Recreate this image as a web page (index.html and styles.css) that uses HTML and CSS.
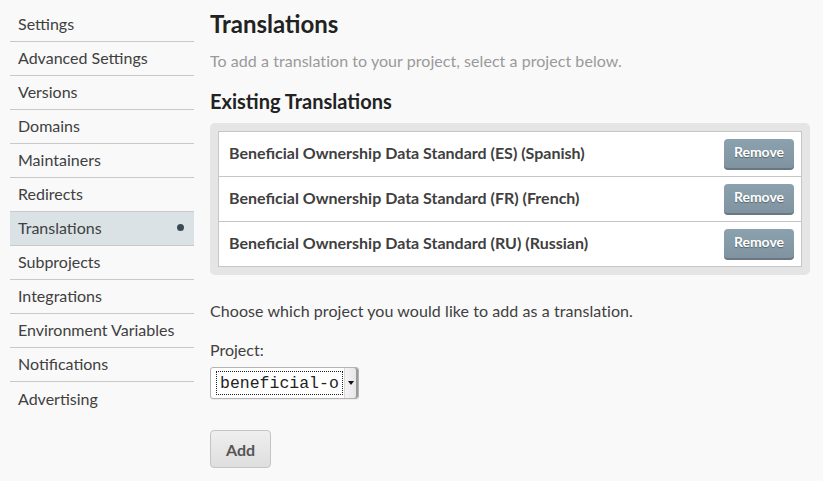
FILE: index.html
```html
<!DOCTYPE html>
<html>
<head>
<meta charset="utf-8">
<link rel="stylesheet" href="styles.css">
</head>
<body>
<div class="page">
  <nav class="sidebar">
    <a class="nav-item">Settings</a>
    <a class="nav-item">Advanced Settings</a>
    <a class="nav-item">Versions</a>
    <a class="nav-item">Domains</a>
    <a class="nav-item">Maintainers</a>
    <a class="nav-item">Redirects</a>
    <a class="nav-item active">Translations<span class="dot"></span></a>
    <a class="nav-item">Subprojects</a>
    <a class="nav-item">Integrations</a>
    <a class="nav-item">Environment Variables</a>
    <a class="nav-item">Notifications</a>
    <a class="nav-item last">Advertising</a>
  </nav>
  <main class="main">
    <h1 class="title">Translations</h1>
    <p class="subtitle">To add a translation to your project, select a project below.</p>
    <h2 class="section">Existing Translations</h2>
    <div class="box">
      <div class="list">
        <div class="row"><span class="row-name">Beneficial Ownership Data Standard (ES) (Spanish)</span><button class="remove">Remove</button></div>
        <div class="row"><span class="row-name">Beneficial Ownership Data Standard (FR) (French)</span><button class="remove">Remove</button></div>
        <div class="row last"><span class="row-name">Beneficial Ownership Data Standard (RU) (Russian)</span><button class="remove">Remove</button></div>
      </div>
    </div>
    <p class="choose">Choose which project you would like to add as a translation.</p>
    <label class="label">Project:</label>
    <div class="select"><span class="select-value">beneficial-o</span><span class="select-arrow"><span class="tri"></span></span></div>
    <button class="add">Add</button>
  </main>
</div>
</body>
</html>
```
FILE: styles.css
```css
html, body {
  margin: 0;
  padding: 0;
  background: #f9f9f9;
  font-family: Lato, "Open Sans", sans-serif;
  color: #404040;
}
.page {
  display: flex;
  gap: 16px;
  padding: 8px 0 0 10px;
}
.sidebar {
  width: 184px;
  display: flex;
  flex-direction: column;
}
.nav-item {
  display: flex;
  align-items: center;
  justify-content: space-between;
  height: 33px;
  line-height: 31px;
  padding: 0 8px 2px;
  box-sizing: border-box;
  height: 34px;
  border-bottom: 1px solid #c9c9c9;
  font-size: 16px;
  color: #404040;
}
.nav-item.last { border-bottom: none; }
.nav-item.active { background: #dae2e6; }
.dot {
  width: 7px;
  height: 7px;
  border-radius: 50%;
  background: #3b4956;
  margin-right: 2px;
}
.main {
  width: 600px;
  display: flex;
  flex-direction: column;
  align-items: flex-start;
}
.title {
  margin: 0;
  font-size: 24px;
  line-height: 32px;
  font-weight: 700;
  color: #222;
}
.subtitle {
  margin: 10px 0 0;
  font-size: 16px;
  line-height: 22px;
  color: #9a9a9a;
  letter-spacing: 0.05px;
}
.section {
  margin: 16px 0 0;
  font-size: 20px;
  line-height: 26px;
  font-weight: 700;
  color: #222;
}
.box {
  margin-top: 9px;
  align-self: stretch;
  background: #e5e5e5;
  border-radius: 5px;
  padding: 8px;
}
.list {
  background: #fff;
  border: 1px solid #c6c6c6;
}
.row {
  height: 44px;
  display: flex;
  align-items: center;
  justify-content: space-between;
  padding: 0 7px 0 10px;
  border-bottom: 1px solid #c6c6c6;
}
.row.last { border-bottom: none; }
.row-name {
  font-size: 16px;
  font-weight: 700;
  color: #404040;
  margin-bottom: 3px;
}
.remove {
  width: 70px;
  height: 31px;
  border: none;
  border-radius: 4px;
  background: linear-gradient(#8ca1ae, #7f929f);
  box-shadow: inset 0 -2px 0 rgba(0,0,0,0.18);
  color: #fff;
  font-family: Lato, sans-serif;
  font-size: 14px;
  font-weight: 700;
  text-shadow: 0 1px 1px rgba(0,0,0,0.35);
  padding: 0 0 5px;
}
.choose {
  margin: 25px 0 0;
  font-size: 16px;
  line-height: 22px;
  color: #404040;
  letter-spacing: 0.07px;
}
.label {
  margin-top: 17px;
  font-size: 16px;
  line-height: 22px;
  color: #404040;
}
.select {
  margin-top: 6px;
  width: 147px;
  height: 30px;
  border: 1px solid #b3b3b3;
  border-radius: 3px;
  background: #fff;
  display: flex;
  align-items: stretch;
  box-shadow: 0 1px 0 rgba(0,0,0,0.05);
}
.select-value {
  margin: 3px 1px 3px 5px;
  flex: 1;
  border: 1px dotted #222;
  font-family: "Liberation Mono", "DejaVu Sans Mono", monospace;
  font-size: 16.5px;
  line-height: 23px;
  color: #222;
  padding-left: 3px;
  overflow: hidden;
  white-space: nowrap;
}
.select-arrow {
  width: 13px;
  background: linear-gradient(90deg, #f4f4f4, #e4e4e4);
  border-left: 1px solid #d8d8d8;
  border-radius: 0 2px 2px 0;
  display: flex;
  align-items: center;
  justify-content: center;
  box-shadow: inset -2px 0 0 #9a9a9a;
}
.tri {
  width: 0;
  height: 0;
  border-left: 3px solid transparent;
  border-right: 3px solid transparent;
  border-top: 4px solid #111;
  margin-right: 2px;
}
.add {
  margin-top: 31px;
  width: 61px;
  height: 38px;
  border: 1px solid #c4c4c4;
  border-radius: 4px;
  background: linear-gradient(#efefef, #dedede);
  color: #555;
  font-family: Lato, sans-serif;
  font-size: 16px;
  font-weight: 700;
  padding: 0;
}
```
